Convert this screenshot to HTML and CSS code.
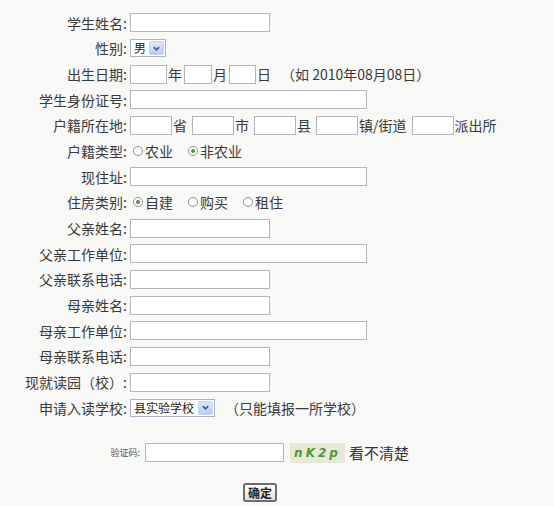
FILE: index.html
```html
<!DOCTYPE html>
<html lang="zh-CN">
<head>
  <meta charset="UTF-8">
  <title>入学报名</title>
  <link rel="stylesheet" href="styles.css">
</head>
<body>
  <form class="reg-form" onsubmit="return false">
    <div class="rows">
      <label class="lbl">学生姓名:</label>
      <div class="fld"><input type="text" class="txt mid"></div>

      <label class="lbl">性别:</label>
      <div class="fld">
        <span class="sel sex"><span class="sel-val">男</span><span class="sel-btn"><svg viewBox="0 0 10 10" width="9" height="9"><path d="M2 3.5l3 3 3-3" fill="none" stroke="#3e5a8e" stroke-width="1.8"/></svg></span></span>
      </div>

      <label class="lbl">出生日期:</label>
      <div class="fld">
        <input type="text" class="txt d1"><span class="unit">年</span><input type="text" class="txt d2"><span class="unit">月</span><input type="text" class="txt d3"><span class="unit">日</span>
        <span class="hint">（如 2010年08月08日）</span>
      </div>

      <label class="lbl">学生身份证号:</label>
      <div class="fld"><input type="text" class="txt long"></div>

      <label class="lbl">户籍所在地:</label>
      <div class="fld">
        <input type="text" class="txt addr"><span class="unit u-gap">省</span><input type="text" class="txt addr"><span class="unit u-gap">市</span><input type="text" class="txt addr"><span class="unit u-gap">县</span><input type="text" class="txt addr"><span class="unit u-gap">镇/街道</span><input type="text" class="txt addr"><span class="unit">派出所</span>
      </div>

      <label class="lbl">户籍类型:</label>
      <div class="fld">
        <span class="radio"></span><span class="opt">农业</span>
        <span class="radio on"></span><span class="opt">非农业</span>
      </div>

      <label class="lbl">现住址:</label>
      <div class="fld"><input type="text" class="txt long"></div>

      <label class="lbl">住房类别:</label>
      <div class="fld">
        <span class="radio on"></span><span class="opt">自建</span>
        <span class="radio"></span><span class="opt">购买</span>
        <span class="radio"></span><span class="opt">租住</span>
      </div>

      <label class="lbl">父亲姓名:</label>
      <div class="fld"><input type="text" class="txt mid"></div>

      <label class="lbl">父亲工作单位:</label>
      <div class="fld"><input type="text" class="txt long"></div>

      <label class="lbl">父亲联系电话:</label>
      <div class="fld"><input type="text" class="txt mid"></div>

      <label class="lbl">母亲姓名:</label>
      <div class="fld"><input type="text" class="txt mid"></div>

      <label class="lbl">母亲工作单位:</label>
      <div class="fld"><input type="text" class="txt long"></div>

      <label class="lbl">母亲联系电话:</label>
      <div class="fld"><input type="text" class="txt mid"></div>

      <label class="lbl">现就读园（校）:</label>
      <div class="fld"><input type="text" class="txt mid"></div>

      <label class="lbl">申请入读学校:</label>
      <div class="fld">
        <span class="sel school"><span class="sel-val">县实验学校</span><span class="sel-btn"><svg viewBox="0 0 10 10" width="9" height="9"><path d="M2 3.5l3 3 3-3" fill="none" stroke="#3e5a8e" stroke-width="1.8"/></svg></span></span>
        <span class="hint hint-school">（只能填报一所学校）</span>
      </div>
    </div>

    <div class="captcha-row">
      <label class="cap-lbl">验证码:</label>
      <input type="text" class="txt cap-input">
      <span class="cap-img">nK2p</span>
      <a class="cap-refresh">看不清楚</a>
    </div>

    <div class="submit-row">
      <button type="submit" class="btn">确定</button>
    </div>
  </form>
</body>
</html>
```

FILE: styles.css
```css
* {
  box-sizing: border-box;
  margin: 0;
  padding: 0;
}
body {
  background: #f8f8f7;
  color: #3a3a3a;
  font-family: "Noto Sans CJK SC", "Liberation Sans", sans-serif;
  font-size: 14px;
}
.reg-form {
  width: 554px;
  padding-top: 10px;
}
.rows {
  display: grid;
  grid-template-columns: 127px 1fr;
  grid-auto-rows: 25.67px;
  align-items: center;
}
.lbl {
  text-align: right;
  white-space: nowrap;
  line-height: 18px;
}
.fld {
  display: flex;
  align-items: center;
  padding-left: 3px;
  white-space: nowrap;
  line-height: 18px;
}
.txt {
  height: 19px;
  border: 1px solid #b4b6bb;
  background: #fff;
  font: inherit;
}
.mid { width: 140px; }
.long { width: 237px; }
.d1 { width: 37px; }
.d2 { width: 28px; }
.d3 { width: 27px; }
.addr { width: 42px; }
.unit {
  margin: 0 2px 0 1px;
}
.u-gap {
  margin-right: 5px;
}
.hint {
  margin-left: 8px;
}
.hint-school {
  margin-left: 10px;
}

/* 下拉框 */
.sel {
  display: inline-flex;
  align-items: center;
  height: 18px;
  border: 1px solid #a9b3c4;
  background: #fff;
  padding-left: 3px;
  font-size: 12px;
}
.sex { width: 36px; }
.school { width: 85px; }
.sel-val {
  flex: 1;
  color: #222;
}
.sel-btn {
  width: 15px;
  height: 14px;
  margin-right: 1px;
  border: 1px solid #c3d3f3;
  border-radius: 2px;
  background: linear-gradient(#dce7fb, #b9cdf3);
  display: flex;
  align-items: center;
  justify-content: center;
}

/* 单选 */
.radio {
  width: 10px;
  height: 10px;
  margin: 0 2px 0 3px;
  border: 1px solid #8d9297;
  border-radius: 50%;
  background: #fff;
  position: relative;
}
.radio.on::after {
  content: "";
  position: absolute;
  left: 2px;
  top: 2px;
  width: 4px;
  height: 4px;
  border-radius: 50%;
  background: #3f9a3c;
}
.opt {
  margin-right: 12px;
}

/* 验证码 */
.captcha-row {
  display: flex;
  align-items: center;
  height: 20px;
  margin-top: 22px;
}
.cap-lbl {
  width: 140px;
  text-align: right;
  font-size: 9px;
  color: #555;
}
.cap-input {
  width: 139px;
  margin-left: 5px;
}
.cap-img {
  width: 55px;
  height: 20px;
  margin-left: 6px;
  background: #e8e8d6;
  color: #4f9a35;
  font-family: "DejaVu Sans", sans-serif;
  font-style: italic;
  font-weight: bold;
  font-size: 12px;
  letter-spacing: 3px;
  display: flex;
  align-items: center;
  justify-content: center;
}
.cap-refresh {
  margin-left: 4px;
  font-size: 15px;
  color: #333;
  cursor: pointer;
}

.submit-row {
  padding-left: 243px;
  margin-top: 19px;
}
.btn {
  width: 34px;
  height: 19px;
  border: 2px solid #6a6e73;
  border-radius: 3px;
  background: linear-gradient(#fdfdfb, #e3e3dc);
  font-family: "Noto Sans CJK SC", sans-serif;
  font-size: 12px;
  font-weight: bold;
  color: #222;
  line-height: 13px;
  padding: 0;
}
```
